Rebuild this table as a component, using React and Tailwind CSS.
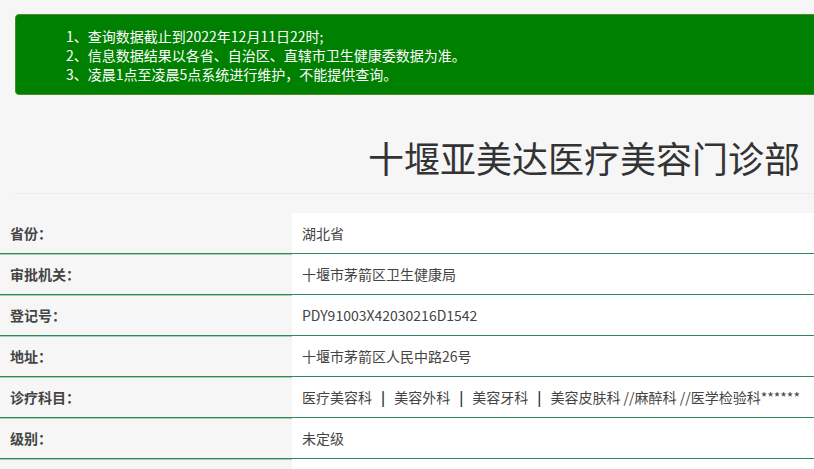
import React from "react";

const notices = [
  "1、查询数据截止到2022年12月11日22时;",
  "2、信息数据结果以各省、自治区、直辖市卫生健康委数据为准。",
  "3、凌晨1点至凌晨5点系统进行维护，不能提供查询。",
];

const Sep = () => <span className="font-bold text-[#333] px-[9px]">|</span>;

const rows = [
  ["省份：", "湖北省"],
  ["审批机关：", "十堰市茅箭区卫生健康局"],
  ["登记号：", "PDY91003X42030216D1542"],
  ["地址：", "十堰市茅箭区人民中路26号"],
  [
    "诊疗科目：",
    <>
      医疗美容科<Sep />美容外科<Sep />美容牙科<Sep />美容皮肤科 //麻醉科 //医学检验科******
    </>,
  ],
  ["级别：", "未定级"],
  ["", ""],
];

export default function App() {
  return (
    <div
      className="w-[814px] h-[469px] overflow-hidden bg-[#f6f6f6] text-[#333]"
      style={{ fontFamily: '"Microsoft YaHei", "Noto Sans CJK SC", "Noto Sans", sans-serif' }}
    >
      {/* notice box */}
      <div className="pt-[14px] pl-[15px]">
        <div className="w-[830px] h-[81px] bg-[#008000] border border-[#4f8a2a] rounded-[4px] pl-[50px] pt-[12px] text-white text-[14px] leading-[19px]">
          {notices.map((n) => (
            <div key={n}>{n}</div>
          ))}
        </div>
      </div>

      {/* title */}
      <div className="ml-[14px] h-[99px] border-b border-[#ebebeb] flex items-center justify-end pr-[14px] pt-[26px]">
        <h1 className="text-[36px] leading-[40px] font-normal text-[#333]">
          十堰亚美达医疗美容门诊部
        </h1>
      </div>

      {/* details table */}
      <div className="mt-[19px]">
        {rows.map(([label, value], i) => (
          <div
            key={i}
            className="flex h-[41px] border-b border-[#2e8b57] shadow-[0_1px_0_#a9cfb6]"
          >
            <div className="w-[292px] flex items-center pl-[10px] text-[14px] font-bold text-[#444]">
              {label}
            </div>
            <div className="flex-1 bg-white flex items-center pl-[10px] text-[14px] text-[#444] whitespace-nowrap">
              {value}
            </div>
          </div>
        ))}
      </div>
    </div>
  );
}
